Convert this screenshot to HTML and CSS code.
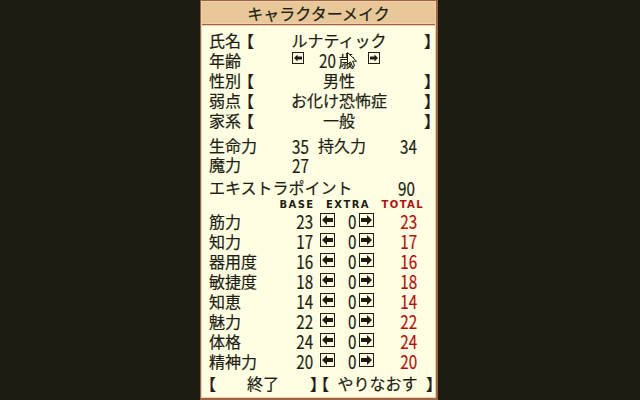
FILE: index.html
```html
<!DOCTYPE html>
<html lang="ja">
<head>
<meta charset="utf-8">
<title>キャラクターメイク</title>
<link rel="stylesheet" href="styles.css">
</head>
<body>
<svg class="defs" aria-hidden="true">
  <symbol id="arrow-l" viewBox="0 0 15 14"><rect x=".5" y=".5" width="14" height="13" fill="none" stroke="currentColor"/><path d="M2 7 L7 2 V5 H13 V9 H7 V12 Z" fill="currentColor"/></symbol>
  <symbol id="arrow-r" viewBox="0 0 15 14"><rect x=".5" y=".5" width="14" height="13" fill="none" stroke="currentColor"/><path d="M13 7 L8 2 V5 H2 V9 H8 V12 Z" fill="currentColor"/></symbol>
  <symbol id="age-l" viewBox="0 0 12 12"><rect x=".5" y=".5" width="11" height="11" fill="none" stroke="currentColor"/><path d="M2 6 L5.5 2.5 V4.5 H10 V7.5 H5.5 V9.5 Z" fill="currentColor"/></symbol>
  <symbol id="age-r" viewBox="0 0 12 12"><rect x=".5" y=".5" width="11" height="11" fill="none" stroke="currentColor"/><path d="M10 6 L6.5 2.5 V4.5 H2 V7.5 H6.5 V9.5 Z" fill="currentColor"/></symbol>
</svg>

<main class="panel">
  <h1 class="title">キャラクターメイク</h1>

  <div class="sheet">
    <section class="profile">
      <div class="prow"><span>氏名</span><span class="br">【</span><span class="val">ルナティック</span><span class="br">】</span></div>
      <div class="prow">
        <span>年齢</span><span></span>
        <span class="val age">
          <svg class="abox" width="12" height="12" viewBox="0 0 12 12"><use href="#age-l" width="12" height="12"/></svg>
          <span class="agenum"><span class="n nl">20</span><span>歳</span></span>
          <svg class="abox" width="12" height="12" viewBox="0 0 12 12"><use href="#age-r" width="12" height="12"/></svg>
        </span>
        <span></span>
      </div>
      <div class="prow"><span>性別</span><span class="br">【</span><span class="val">男性</span><span class="br">】</span></div>
      <div class="prow"><span>弱点</span><span class="br">【</span><span class="val">お化け恐怖症</span><span class="br">】</span></div>
      <div class="prow"><span>家系</span><span class="br">【</span><span class="val">一般</span><span class="br">】</span></div>
    </section>

    <section class="attrs">
      <span>生命力</span><span class="n nl">35</span><span>持久力</span><span class="n nl">34</span>
      <span>魔力</span><span class="n nl">27</span><span></span><span></span>
    </section>

    <div class="points"><span>エキストラポイント</span><span class="n nl">90</span></div>

    <section class="stats">
      <div class="shead"><span class="h-base">BASE</span><span class="h-extra">EXTRA</span><span class="h-total">TOTAL</span></div>

      <div class="srow"><span>筋力</span><span class="n">23</span><svg class="sbox" width="15" height="14" viewBox="0 0 15 14"><use href="#arrow-l" width="15" height="14"/></svg><span class="n">0</span><svg class="sbox r" width="15" height="14" viewBox="0 0 15 14"><use href="#arrow-r" width="15" height="14"/></svg><span class="n tot">23</span></div>
      <div class="srow"><span>知力</span><span class="n">17</span><svg class="sbox" width="15" height="14" viewBox="0 0 15 14"><use href="#arrow-l" width="15" height="14"/></svg><span class="n">0</span><svg class="sbox r" width="15" height="14" viewBox="0 0 15 14"><use href="#arrow-r" width="15" height="14"/></svg><span class="n tot">17</span></div>
      <div class="srow"><span>器用度</span><span class="n">16</span><svg class="sbox" width="15" height="14" viewBox="0 0 15 14"><use href="#arrow-l" width="15" height="14"/></svg><span class="n">0</span><svg class="sbox r" width="15" height="14" viewBox="0 0 15 14"><use href="#arrow-r" width="15" height="14"/></svg><span class="n tot">16</span></div>
      <div class="srow"><span>敏捷度</span><span class="n">18</span><svg class="sbox" width="15" height="14" viewBox="0 0 15 14"><use href="#arrow-l" width="15" height="14"/></svg><span class="n">0</span><svg class="sbox r" width="15" height="14" viewBox="0 0 15 14"><use href="#arrow-r" width="15" height="14"/></svg><span class="n tot">18</span></div>
      <div class="srow"><span>知恵</span><span class="n">14</span><svg class="sbox" width="15" height="14" viewBox="0 0 15 14"><use href="#arrow-l" width="15" height="14"/></svg><span class="n">0</span><svg class="sbox r" width="15" height="14" viewBox="0 0 15 14"><use href="#arrow-r" width="15" height="14"/></svg><span class="n tot">14</span></div>
      <div class="srow"><span>魅力</span><span class="n">22</span><svg class="sbox" width="15" height="14" viewBox="0 0 15 14"><use href="#arrow-l" width="15" height="14"/></svg><span class="n">0</span><svg class="sbox r" width="15" height="14" viewBox="0 0 15 14"><use href="#arrow-r" width="15" height="14"/></svg><span class="n tot">22</span></div>
      <div class="srow"><span>体格</span><span class="n">24</span><svg class="sbox" width="15" height="14" viewBox="0 0 15 14"><use href="#arrow-l" width="15" height="14"/></svg><span class="n">0</span><svg class="sbox r" width="15" height="14" viewBox="0 0 15 14"><use href="#arrow-r" width="15" height="14"/></svg><span class="n tot">24</span></div>
      <div class="srow"><span>精神力</span><span class="n">20</span><svg class="sbox" width="15" height="14" viewBox="0 0 15 14"><use href="#arrow-l" width="15" height="14"/></svg><span class="n">0</span><svg class="sbox r" width="15" height="14" viewBox="0 0 15 14"><use href="#arrow-r" width="15" height="14"/></svg><span class="n tot">20</span></div>
    </section>

    <nav class="actions">
      <div class="btn"><span class="br">【</span><span>終了</span><span class="br">】</span></div>
      <div class="btn"><span class="br">【</span><span>やりなおす</span><span class="br">】</span></div>
    </nav>
  </div>

  <!-- mouse pointer resting over the age field -->
  <svg class="pointer" width="11" height="16" viewBox="0 0 11 16"><path d="M.5 .5 V12.5 L3.5 9.8 L5.6 14.6 L7.6 13.7 L5.6 9.2 H9.5 Z" fill="#fffde2" stroke="#1c1a10"/></svg>
</main>
</body>
</html>
```

FILE: styles.css
```css
* { box-sizing: border-box; }

html, body {
  margin: 0;
  height: 100%;
}

body {
  background: #1c1c12;
  font-family: "Noto Sans CJK JP", sans-serif;
  font-size: 16px;
  color: #201e14;
  -webkit-text-stroke: 0.2px #201e14;
  overflow: hidden;
}

.defs {
  position: absolute;
  width: 0;
  height: 0;
  overflow: hidden;
}

/* framed window */
.panel {
  position: relative;
  margin-left: 200px;
  width: 238px;
  height: 400px;
  border-style: solid;
  border-color: #9c6440;
  border-width: 1px 2px 2px 1px;
  padding: 1px;
  background: #f2ceb0;
  display: flex;
  flex-direction: column;
}

.title {
  margin: 0;
  padding: 2px 0 1px;
  line-height: 19px;
  font-size: 16px;
  font-weight: normal;
  text-align: center;
  background: #e8c898;
  border-bottom: 1px solid #9c6440;
  box-shadow: inset 0 -1px 0 #f2ceb0;
}

.sheet {
  flex: 1;
  background: #fffde2;
  border-top: 1px solid #f2ceb0;
  padding: 4px 0 0 7px;
}

/* numbers: tall, narrow digits */
.n {
  display: inline-block;
  font-size: 19px;
  line-height: inherit;
  transform: scaleX(.8);
  transform-origin: right center;
}
.n.nl { transform-origin: left center; }

.br { font-feature-settings: "halt"; }

/* name / age / sex ... */
.prow {
  display: grid;
  grid-template-columns: 37px 8px 170px 8px;
  line-height: 20px;
  height: 20px;
}
.val { text-align: center; white-space: nowrap; }

.age {
  display: flex;
  justify-content: center;
  align-items: center;
  padding-right: 6px;
}
.agenum {
  display: flex;
  white-space: nowrap;
  margin: 0 13px 0 15px;
}
.agenum .n { margin-right: -2px; }
.abox {
  margin-top: -4px;
  color: #201e14;
}

/* vitality block */
.attrs {
  margin-top: 6px;
  display: grid;
  grid-template-columns: 83px 26px 82px 1fr;
  grid-auto-rows: 19px;
  line-height: 19px;
}

.points {
  margin-top: 4px;
  display: grid;
  grid-template-columns: 189px 1fr;
  line-height: 19px;
  height: 19px;
}

/* attribute table */
.stats { margin-top: 2px; }

.shead,
.srow {
  display: grid;
  grid-template-columns: 71px 33px 22px 22px 17px 43px;
}

.shead {
  height: 12px;
  line-height: 12px;
  font-family: "DejaVu Sans", sans-serif;
  font-weight: bold;
  font-size: 10px;
  letter-spacing: 1.4px;
  -webkit-text-stroke: 0;
}
.h-base { grid-column: 2; justify-self: center; margin-left: 1px; }
.h-extra { grid-column: 3 / 6; justify-self: center; margin-left: 9px; }
.h-total { grid-column: 6; justify-self: end; margin-right: -7px; color: #b01010; }

.srow {
  height: 20px;
  line-height: 20px;
  align-items: center;
}
.srow .n { justify-self: end; }
.srow .tot { color: #b01010; -webkit-text-stroke-color: #b01010; }

.sbox {
  justify-self: end;
  margin-top: -2px;
  color: #201e14;
}
.sbox.r { justify-self: start; margin-left: 2px; }

/* bottom commands */
.actions {
  margin: 2px 0 0 -1px;
  display: grid;
  grid-template-columns: 110px 113px;
  column-gap: 3px;
  line-height: 20px;
}
.btn {
  display: flex;
  justify-content: space-between;
}

.pointer {
  position: absolute;
  left: 146px;
  top: 51px;
}
```
